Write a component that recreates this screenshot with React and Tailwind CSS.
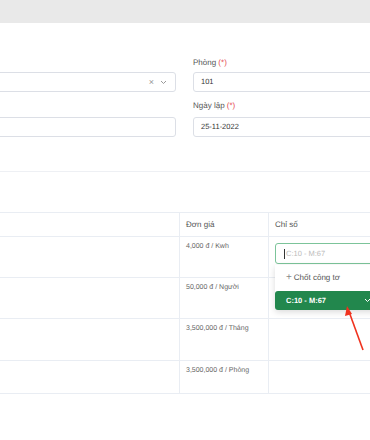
import React from "react";

const font = { fontFamily: '"Liberation Sans", Arial, sans-serif' };

function Chevron({ className, stroke = "#999" }) {
  return (
    <svg width="7" height="5" viewBox="0 0 7 5" className={className}>
      <path d="M1 1 L3.5 3.5 L6 1" fill="none" stroke={stroke} strokeWidth="1" />
    </svg>
  );
}

export default function App() {
  return (
    <div className="relative w-[370px] h-[440px] overflow-hidden bg-white [text-rendering:geometricPrecision]" style={font}>
      <div className="h-[23px] bg-[#e9e9e9]" />
      {/* form */}
      <div className="flex pt-[33px]">
        <div className="w-[176px] flex flex-col">
          <div className="h-[14px] mb-[2px]" />
          <div className="h-[20px] -ml-[4px] w-[180px] border border-[#dcdfe6] rounded-[3px] flex items-center justify-end pr-[8px] gap-[6px]">
            <span className="text-[9px] text-[#999] leading-none">×</span>
            <Chevron />
          </div>
          <div className="h-[14px] mt-[7px] mb-[4px]" />
          <div className="h-[20px] -ml-[4px] w-[180px] border border-[#dcdfe6] rounded-[3px]" />
        </div>
        <div className="ml-[17px] flex flex-col">
          <div className="h-[14px] mb-[2px] text-[8px] text-[#555] leading-[14px]">
            Phòng <span className="text-[#e5484d]">(*)</span>
          </div>
          <div className="h-[20px] w-[190px] border border-[#dcdfe6] rounded-[3px] flex items-center pl-[7px] text-[7.5px] text-[#333]">
            101
          </div>
          <div className="h-[14px] mt-[7px] mb-[4px] text-[8px] text-[#555] leading-[14px]">
            Ngày lập <span className="text-[#e5484d]">(*)</span>
          </div>
          <div className="h-[20px] w-[190px] border border-[#dcdfe6] rounded-[3px] flex items-center pl-[7px] text-[7.5px] text-[#333]">
            25-11-2022
          </div>
        </div>
      </div>
      <div className="mt-[34px] border-t border-[#eef0f4]" />
      {/* table */}
      <div className="mt-[40px] border-t border-[#e9edf3] grid grid-cols-[180px_89px_1fr] text-[#555]">
        <div className="h-[24px] border-r border-b border-[#e9edf3]" />
        <div className="h-[24px] border-r border-b border-[#e9edf3] pl-[6px] flex items-center text-[8px]">Đơn giá</div>
        <div className="h-[24px] border-b border-[#e9edf3] pl-[6px] flex items-center text-[8px]">Chỉ số</div>

        <div className="h-[41px] border-r border-b border-[#e9edf3]" />
        <div className="h-[41px] border-r border-b border-[#e9edf3] pl-[6px] pt-[5px] text-[7px] text-[#666]">4,000 đ / Kwh</div>
        <div className="h-[41px] border-b border-[#e9edf3] pl-[6px] pt-[6px] relative">
          <div className="h-[21px] w-[110px] border border-[#7cc49a] rounded-[3px] bg-white flex items-center pl-[8px] text-[7.5px] text-[#bbb]">
            <span className="w-px h-[10px] bg-[#333] mr-px" />C:10 - M:67
          </div>
          <div className="absolute left-[6px] top-[28px] w-[110px] z-10 bg-white rounded-b-[3px] shadow-[0_2px_6px_rgba(0,0,0,0.15)]">
            <div className="h-[26px] flex items-center pl-[11px] text-[8px] text-[#555]">
              <span className="text-[10px] text-[#888] mr-[2px] leading-none">+</span>Chốt công tơ
            </div>
            <div className="h-[19px] bg-[#22874d] rounded-[3px] flex items-center pl-[11px] text-[7.5px] font-bold text-white">
              C:10 - M:67
              <Chevron className="ml-[38px]" stroke="#fff" />
            </div>
          </div>
        </div>

        <div className="h-[41px] border-r border-b border-[#e9edf3]" />
        <div className="h-[41px] border-r border-b border-[#e9edf3] pl-[6px] pt-[5px] text-[7px] text-[#666]">50,000 đ / Người</div>
        <div className="h-[41px] border-b border-[#e9edf3]" />

        <div className="h-[42px] border-r border-b border-[#e9edf3]" />
        <div className="h-[42px] border-r border-b border-[#e9edf3] pl-[6px] pt-[5px] text-[7px] text-[#666]">3,500,000 đ / Tháng</div>
        <div className="h-[42px] border-b border-[#e9edf3]" />

        <div className="h-[33px] border-r border-b border-[#e9edf3]" />
        <div className="h-[33px] border-r border-b border-[#e9edf3] pl-[6px] pt-[5px] text-[7px] text-[#666]">3,500,000 đ / Phòng</div>
        <div className="h-[33px] border-b border-[#e9edf3]" />
      </div>
      {/* red arrow */}
      <svg className="absolute left-0 top-0 pointer-events-none z-20" width="370" height="440">
        <line x1="363" y1="350" x2="349.5" y2="313" stroke="#f0321e" strokeWidth="1.6" />
        <polygon points="347,306 345,316 352,314" fill="#f0321e" />
      </svg>
    </div>
  );
}
